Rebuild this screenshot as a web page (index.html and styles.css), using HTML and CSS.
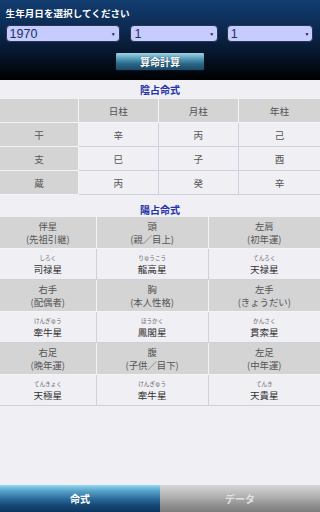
FILE: index.html
```html
<!DOCTYPE html>
<html lang="ja">
<head>
<meta charset="utf-8">
<meta name="viewport" content="width=288">
<link rel="stylesheet" href="styles.css">
</head>
<body>
<div class="page">
  <header class="top">
    <div class="prompt">生年月日を選択してください</div>
    <div class="selects">
      <div class="sel sel-year"><span>1970</span><span class="arrow">▼</span></div>
      <div class="sel sel-month"><span>1</span><span class="arrow">▼</span></div>
      <div class="sel sel-day"><span>1</span><span class="arrow">▼</span></div>
    </div>
    <div class="btn-row"><div class="calc-btn">算命計算</div></div>
  </header>

  <main class="content">
    <div class="sec-title first">陰占命式</div>
    <div class="grid-in">
      <div class="cell g"></div>
      <div class="cell g">日柱</div>
      <div class="cell g">月柱</div>
      <div class="cell g last">年柱</div>

      <div class="cell g">干</div>
      <div class="cell d">辛</div>
      <div class="cell d">丙</div>
      <div class="cell d last">己</div>

      <div class="cell g">支</div>
      <div class="cell d">巳</div>
      <div class="cell d">子</div>
      <div class="cell d last">酉</div>

      <div class="cell g">蔵</div>
      <div class="cell d">丙</div>
      <div class="cell d">癸</div>
      <div class="cell d last">辛</div>
    </div>

    <div class="sec-title second">陽占命式</div>
    <div class="grid-yo">
      <div class="c2 g hdr"><span>伴星</span><span>(先祖引継)</span></div>
      <div class="c2 g hdr"><span>頭</span><span>(親／目上)</span></div>
      <div class="c2 g hdr last"><span>左肩</span><span>(初年運)</span></div>

      <div class="c2 d star"><span class="ruby">しろく</span><span class="name">司禄星</span></div>
      <div class="c2 d star"><span class="ruby">りゅうこう</span><span class="name">龍高星</span></div>
      <div class="c2 d star last"><span class="ruby">てんろく</span><span class="name">天禄星</span></div>

      <div class="c2 g hdr"><span>右手</span><span>(配偶者)</span></div>
      <div class="c2 g hdr"><span>胸</span><span>(本人性格)</span></div>
      <div class="c2 g hdr last"><span>左手</span><span>(きょうだい)</span></div>

      <div class="c2 d star"><span class="ruby">けんぎゅう</span><span class="name">牽牛星</span></div>
      <div class="c2 d star"><span class="ruby">ほうかく</span><span class="name">鳳閣星</span></div>
      <div class="c2 d star last"><span class="ruby">かんさく</span><span class="name">貫索星</span></div>

      <div class="c2 g hdr"><span>右足</span><span>(晩年運)</span></div>
      <div class="c2 g hdr"><span>腹</span><span>(子供／目下)</span></div>
      <div class="c2 g hdr last"><span>左足</span><span>(中年運)</span></div>

      <div class="c2 d star"><span class="ruby">てんきょく</span><span class="name">天極星</span></div>
      <div class="c2 d star"><span class="ruby">けんぎゅう</span><span class="name">牽牛星</span></div>
      <div class="c2 d star last"><span class="ruby">てんき</span><span class="name">天貴星</span></div>
    </div>
  </main>

  <nav class="tabs">
    <div class="tab active">命式</div>
    <div class="tab">データ</div>
  </nav>
</div>
</body>
</html>
```

FILE: styles.css
```css
html, body {
  margin: 0;
  padding: 0;
}
body {
  background: #efeff4;
  font-family: "Noto Sans CJK JP", "Liberation Sans", sans-serif;
}
.page {
  display: flex;
  flex-direction: column;
  min-height: 100vh;
}
.top {
  height: 80px;
  box-sizing: border-box;
  padding: 6px 0 0 0;
  background: linear-gradient(to bottom, #123d70 0%, #0c2a52 35%, #061428 70%, #000 100%);
}
.prompt {
  color: #fff;
  font-size: 9.6px;
  font-weight: bold;
  line-height: 14px;
  padding-left: 1.74%;
}
.selects {
  display: flex;
  margin-top: 5px;
  padding: 0 2.08% 0 1.74%;
}
.sel {
  box-sizing: border-box;
  height: 17px;
  background: #c6ccfd;
  border: 1px solid #2a3550;
  border-radius: 4px;
  display: flex;
  align-items: center;
  justify-content: space-between;
  padding: 0 3px 0 3px;
  font-family: "Liberation Sans", sans-serif;
  font-size: 12.5px;
  color: #223060;
}
.sel-year { flex: 104; }
.sel-month { flex: 78; margin-left: 3.47%; }
.sel-day { flex: 77; margin-left: 2.78%; }
.arrow {
  font-size: 5px;
  color: #1a2340;
  margin-top: 1px;
}
.btn-row {
  display: flex;
  justify-content: center;
  margin-top: 10px;
}
.calc-btn {
  box-sizing: border-box;
  width: 28.1%;
  height: 19px;
  border: 1px solid #07121f;
  border-radius: 2px;
  background: linear-gradient(to bottom, #9ad6ea 0%, #4a8fae 40%, #2b6585 65%, #1b4767 100%);
  color: #fff;
  font-size: 10px;
  font-weight: bold;
  line-height: 17px;
  text-align: center;
  text-shadow: 0 0 1px #123;
}
.content {
  flex: 1;
}
.sec-title {
  color: #2232a8;
  font-size: 10px;
  font-weight: bold;
  text-align: center;
}
.sec-title.first {
  height: 19px;
  line-height: 19px;
}
.sec-title.second {
  height: 22px;
  line-height: 14px;
  padding-top: 8px;
  box-sizing: border-box;
}
.grid-in {
  display: grid;
  grid-template-columns: 24.65% 25% 25% 1fr;
  grid-auto-rows: 24px;
}
.cell {
  box-sizing: border-box;
  display: flex;
  align-items: center;
  justify-content: center;
  font-size: 9.6px;
  color: #555;
}
.g {
  background: #d4d4d4;
  border-right: 1px solid #f4f4f6;
  border-bottom: 1px solid #f4f4f6;
}
.d {
  background: #efeff4;
  border-right: 1px solid #cdd1dd;
  border-bottom: 1px solid #cdd1dd;
}
.last {
  border-right: none;
}
.grid-yo {
  display: grid;
  grid-template-columns: 30.2% 35% 1fr;
  grid-template-rows: 32px 31px 32px 31px 32px 31px;
}
.c2 {
  box-sizing: border-box;
  display: flex;
  flex-direction: column;
  align-items: center;
  justify-content: center;
}
.hdr {
  font-size: 9.4px;
  line-height: 12.5px;
  color: #555;
}
.star .ruby {
  font-size: 5.6px;
  line-height: 9px;
  color: #666;
}
.star .name {
  font-size: 9.6px;
  line-height: 12px;
  color: #333;
}
.tabs {
  display: flex;
  height: 27px;
}
.tab {
  flex: 1;
  display: flex;
  align-items: center;
  justify-content: center;
  font-size: 10px;
  font-weight: bold;
  color: #e2e2e2;
  background: linear-gradient(to bottom, #d6d6d6 0%, #b4b4b4 40%, #909090 75%, #7c7c7c 100%);
}
.tab.active {
  color: #fff;
  background: linear-gradient(to bottom, #96d8f2 0%, #5aa6cc 20%, #2e6e9e 50%, #164874 75%, #0c3560 100%);
}
```
